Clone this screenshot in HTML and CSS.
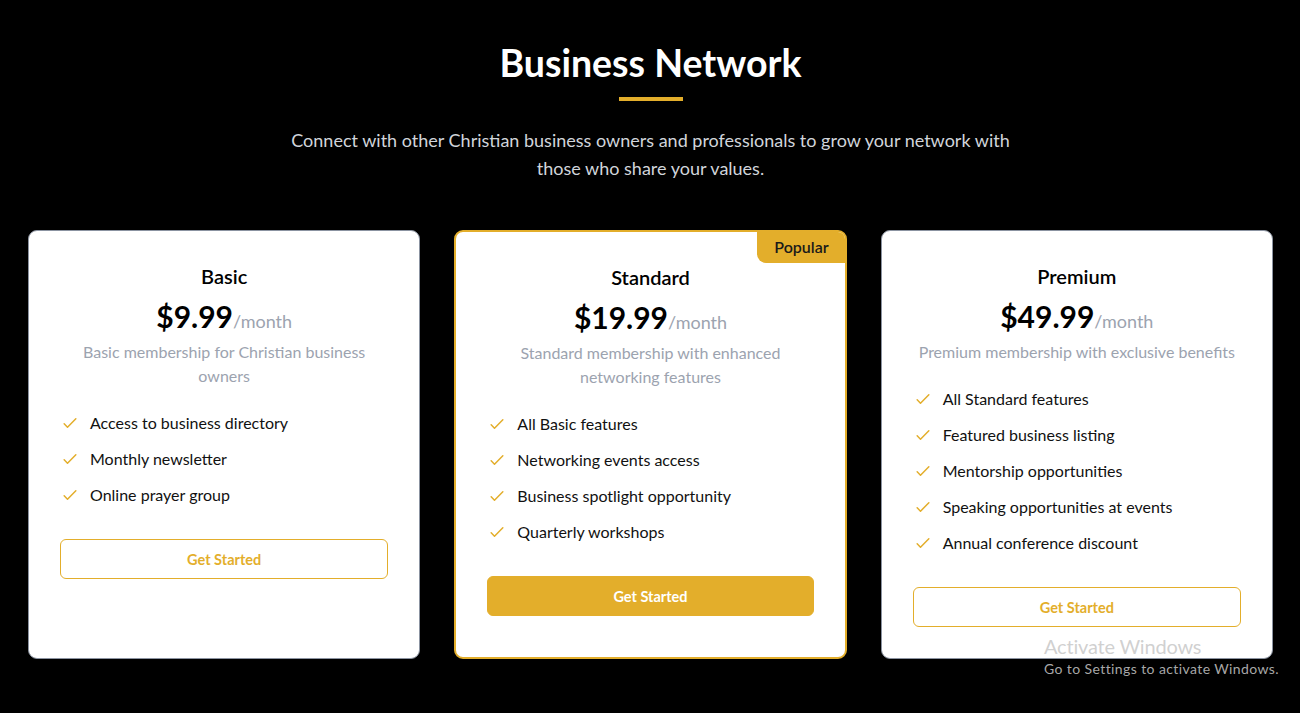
FILE: index.html
```html
<!DOCTYPE html>
<html lang="en">
<head>
<meta charset="utf-8">
<title>Business Network</title>
<link rel="stylesheet" href="styles.css">
</head>
<body>
<section class="network">
  <header class="intro">
    <h1 class="intro-title">Business Network</h1>
    <div class="intro-rule"></div>
    <p class="intro-text">Connect with other Christian business owners and professionals to grow your network with those who share your values.</p>
  </header>

  <div class="plans">
    <article class="plan">
      <h2 class="plan-name">Basic</h2>
      <div class="plan-price"><span class="amount">$9.99</span><span class="period">/month</span></div>
      <p class="plan-desc">Basic membership for Christian business owners</p>
      <ul class="features">
        <li class="feature"><svg class="check" viewBox="0 0 24 24"><path d="M5 13l4 4L19 7"/></svg><span>Access to business directory</span></li>
        <li class="feature"><svg class="check" viewBox="0 0 24 24"><path d="M5 13l4 4L19 7"/></svg><span>Monthly newsletter</span></li>
        <li class="feature"><svg class="check" viewBox="0 0 24 24"><path d="M5 13l4 4L19 7"/></svg><span>Online prayer group</span></li>
      </ul>
      <button class="btn btn-outline">Get Started</button>
    </article>

    <article class="plan plan-popular">
      <div class="badge">Popular</div>
      <h2 class="plan-name">Standard</h2>
      <div class="plan-price"><span class="amount">$19.99</span><span class="period">/month</span></div>
      <p class="plan-desc">Standard membership with enhanced networking features</p>
      <ul class="features">
        <li class="feature"><svg class="check" viewBox="0 0 24 24"><path d="M5 13l4 4L19 7"/></svg><span>All Basic features</span></li>
        <li class="feature"><svg class="check" viewBox="0 0 24 24"><path d="M5 13l4 4L19 7"/></svg><span>Networking events access</span></li>
        <li class="feature"><svg class="check" viewBox="0 0 24 24"><path d="M5 13l4 4L19 7"/></svg><span>Business spotlight opportunity</span></li>
        <li class="feature"><svg class="check" viewBox="0 0 24 24"><path d="M5 13l4 4L19 7"/></svg><span>Quarterly workshops</span></li>
      </ul>
      <button class="btn btn-solid">Get Started</button>
    </article>

    <article class="plan">
      <h2 class="plan-name">Premium</h2>
      <div class="plan-price"><span class="amount">$49.99</span><span class="period">/month</span></div>
      <p class="plan-desc">Premium membership with exclusive benefits</p>
      <ul class="features">
        <li class="feature"><svg class="check" viewBox="0 0 24 24"><path d="M5 13l4 4L19 7"/></svg><span>All Standard features</span></li>
        <li class="feature"><svg class="check" viewBox="0 0 24 24"><path d="M5 13l4 4L19 7"/></svg><span>Featured business listing</span></li>
        <li class="feature"><svg class="check" viewBox="0 0 24 24"><path d="M5 13l4 4L19 7"/></svg><span>Mentorship opportunities</span></li>
        <li class="feature"><svg class="check" viewBox="0 0 24 24"><path d="M5 13l4 4L19 7"/></svg><span>Speaking opportunities at events</span></li>
        <li class="feature"><svg class="check" viewBox="0 0 24 24"><path d="M5 13l4 4L19 7"/></svg><span>Annual conference discount</span></li>
      </ul>
      <button class="btn btn-outline">Get Started</button>
    </article>
  </div>
</section>

<div class="watermark">
  <div class="wm-title">Activate Windows</div>
  <div class="wm-sub">Go to Settings to activate Windows.</div>
</div>
</body>
</html>
```

FILE: styles.css
```css
* { box-sizing: border-box; }

html, body {
  margin: 0;
  padding: 0;
  background: #000;
  height: 100%;
  overflow: hidden;
}

body {
  font-family: "Segoe UI", "Lato", "Liberation Sans", sans-serif;
  color: #111;
  position: relative;
}

.network {
  padding: 43px 27px 0 28px;
}

.intro {
  display: flex;
  flex-direction: column;
  align-items: center;
  text-align: center;
}

.intro-title {
  margin: 0;
  font-size: 37.5px;
  line-height: 40px;
  font-weight: 700;
  color: #fff;
}

.intro-rule {
  width: 64px;
  height: 4px;
  background: #e3ae2b;
  margin-top: 14px;
}

.intro-text {
  margin: 25px 0 0;
  max-width: 760px;
  font-size: 18px;
  line-height: 28px;
  color: #d1d5db;
}

.plans {
  margin-top: 48px;
  display: grid;
  grid-template-columns: repeat(3, 1fr);
  gap: 34px;
}

.plan {
  position: relative;
  background: #fff;
  border: 1px solid #8b93a1;
  border-radius: 9px;
  padding: 31px;
  display: flex;
  flex-direction: column;
  align-items: stretch;
  text-align: center;
}

.plan-popular {
  border: 2px solid #e3ae2b;
  padding: 31px;
  overflow: hidden;
}

.badge {
  position: absolute;
  top: -2px;
  right: -2px;
  background: #e3ae2b;
  color: #1a1a1a;
  font-size: 16px;
  font-weight: 600;
  line-height: 20px;
  padding: 7px 18px 6px 17px;
  border-radius: 0 9px 0 9px;
}

.plan-name {
  margin: 0;
  font-size: 20px;
  line-height: 28px;
  font-weight: 600;
  color: #000;
}

.plan-price {
  margin-top: 8px;
  line-height: 36px;
}

.amount {
  font-size: 30px;
  font-weight: 700;
  color: #000;
}

.period {
  font-size: 18px;
  color: #9ca3af;
}

.plan-desc {
  margin: 0;
  font-size: 16px;
  line-height: 24px;
  color: #9ca3af;
}

.features {
  list-style: none;
  margin: 23px 0 32px;
  padding: 0;
  display: flex;
  flex-direction: column;
  gap: 12px;
  text-align: left;
}

.feature {
  display: flex;
  align-items: center;
  gap: 10px;
  font-size: 16px;
  line-height: 24px;
  color: #111;
}

.check {
  width: 20px;
  height: 20px;
  flex: none;
  fill: none;
  stroke: #e3ae2b;
  stroke-width: 1.8;
  stroke-linecap: round;
  stroke-linejoin: round;
}

.btn {
  display: block;
  width: 100%;
  height: 40px;
  border-radius: 6px;
  font-family: inherit;
  font-size: 14.5px;
  font-weight: 700;
  cursor: pointer;
}

.btn-outline {
  background: #fff;
  border: 1px solid #e3ae2b;
  color: #e3ae2b;
}

.btn-solid {
  background: #e3ae2b;
  border: 1px solid #e3ae2b;
  color: #fff;
}

.watermark {
  position: absolute;
  left: 1044px;
  top: 634px;
  color: rgba(200, 200, 200, 0.85);
  pointer-events: none;
}

.wm-title {
  font-size: 20px;
  line-height: 24px;
  letter-spacing: -0.2px;
}

.wm-sub {
  font-size: 14px;
  line-height: 20px;
  margin-top: 1px;
  letter-spacing: 0.4px;
}
```
